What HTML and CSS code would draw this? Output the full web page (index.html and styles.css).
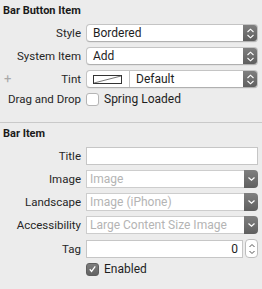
FILE: index.html
```html
<!DOCTYPE html>
<html>
<head>
<meta charset="utf-8">
<link rel="stylesheet" href="styles.css">
</head>
<body>
<div class="panel">
  <section class="group first">
    <div class="heading">Bar Button Item</div>
    <div class="rows">
      <div class="row">
        <span class="label">Style</span>
        <div class="popup"><span class="ptext">Bordered</span><span class="arrows updown"><svg width="9" height="11" viewBox="0 0 9 11"><path d="M1.5 4 L4.5 1.2 L7.5 4 M1.5 7 L4.5 9.8 L7.5 7" fill="none" stroke="#fff" stroke-width="1.1"/></svg></span></div>
      </div>
      <div class="row">
        <span class="label">System Item</span>
        <div class="popup"><span class="ptext">Add</span><span class="arrows updown"><svg width="9" height="11" viewBox="0 0 9 11"><path d="M1.5 4 L4.5 1.2 L7.5 4 M1.5 7 L4.5 9.8 L7.5 7" fill="none" stroke="#fff" stroke-width="1.1"/></svg></span></div>
      </div>
      <div class="row">
        <span class="plus">+</span>
        <span class="label">Tint</span>
        <div class="popup"><span class="swatch"><svg width="29" height="9" viewBox="0 0 29 9"><rect x="0.5" y="0.5" width="28" height="8" fill="#fff" stroke="#333" stroke-width="1"/><path d="M1 8 L28 1" stroke="#555" stroke-width="0.8"/></svg></span><span class="divider"></span><span class="ptext">Default</span><span class="arrows updown"><svg width="9" height="11" viewBox="0 0 9 11"><path d="M1.5 4 L4.5 1.2 L7.5 4 M1.5 7 L4.5 9.8 L7.5 7" fill="none" stroke="#fff" stroke-width="1.1"/></svg></span></div>
      </div>
      <div class="row check-row">
        <span class="label">Drag and Drop</span>
        <label class="check"><span class="box"></span><span>Spring Loaded</span></label>
      </div>
    </div>
  </section>
  <section class="group second">
    <div class="heading">Bar Item</div>
    <div class="rows">
      <div class="row">
        <span class="label">Title</span>
        <div class="field"></div>
      </div>
      <div class="row">
        <span class="label">Image</span>
        <div class="combo"><span class="ctext">Image</span><span class="arrows down"><svg width="9" height="6" viewBox="0 0 9 6"><path d="M1.5 1.5 L4.5 4.3 L7.5 1.5" fill="none" stroke="#fff" stroke-width="1.2"/></svg></span></div>
      </div>
      <div class="row">
        <span class="label">Landscape</span>
        <div class="combo"><span class="ctext">Image (iPhone)</span><span class="arrows down"><svg width="9" height="6" viewBox="0 0 9 6"><path d="M1.5 1.5 L4.5 4.3 L7.5 1.5" fill="none" stroke="#fff" stroke-width="1.2"/></svg></span></div>
      </div>
      <div class="row">
        <span class="label">Accessibility</span>
        <div class="combo"><span class="ctext">Large Content Size Image</span><span class="arrows down"><svg width="9" height="6" viewBox="0 0 9 6"><path d="M1.5 1.5 L4.5 4.3 L7.5 1.5" fill="none" stroke="#fff" stroke-width="1.2"/></svg></span></div>
      </div>
      <div class="row">
        <span class="label">Tag</span>
        <div class="tagwrap"><div class="field num">0</div><span class="stepper"><svg width="8" height="14" viewBox="0 0 8 14"><path d="M1.5 5 L4 2.5 L6.5 5 M1.5 9 L4 11.5 L6.5 9" fill="none" stroke="#555" stroke-width="1"/></svg></span></div>
      </div>
      <div class="row check-row">
        <span class="label"></span>
        <label class="check"><span class="box checked"><svg width="12" height="12" viewBox="0 0 12 12"><path d="M3 6.3 L5 8.6 L9 3.2" fill="none" stroke="#fff" stroke-width="1.4"/></svg></span><span>Enabled</span></label>
      </div>
    </div>
  </section>
</div>
</body>
</html>
```
FILE: styles.css
```css
html, body {
  margin: 0;
  padding: 0;
}
body {
  background: #ececec;
  font-family: "Roboto", "Liberation Sans", sans-serif;
  font-size: 11.5px;
  color: #262626;
  width: 262px;
  height: 289px;
  overflow: hidden;
}
.panel {
  display: flex;
  flex-direction: column;
}
.group {
  padding: 3px 4px 0 0;
}
.first {
  padding-bottom: 15px;
  border-bottom: 1px solid #c9c9c9;
}
.second {
  padding-top: 3px;
}
.heading {
  font-weight: 700;
  font-size: 11px;
  color: #1a1a1a;
  padding-left: 3px;
  height: 15px;
  line-height: 15px;
}
.rows {
  display: flex;
  flex-direction: column;
  gap: 5px;
  margin-top: 6px;
}
.row {
  display: grid;
  grid-template-columns: 81px 172px;
  column-gap: 5px;
  align-items: center;
  height: 18px;
  position: relative;
}
.label {
  text-align: right;
  white-space: nowrap;
}
.plus {
  position: absolute;
  left: 4px;
  top: 1px;
  color: #a8a8a8;
  font-size: 13px;
}
.popup {
  display: flex;
  align-items: center;
  height: 16px;
  background: #fff;
  border: 1px solid #c4c4c4;
  border-bottom-color: #b0b0b0;
  border-radius: 4px;
  overflow: hidden;
  box-shadow: 0 0.5px 0.5px rgba(0,0,0,0.08);
}
.ptext {
  flex: 1;
  padding-left: 6px;
  color: #1e1e1e;
  font-size: 12px;
}
.arrows {
  width: 14px;
  align-self: stretch;
  background: linear-gradient(#7f7f7f, #5f5f5f);
  display: flex;
  align-items: center;
  justify-content: center;
}
.swatch {
  display: flex;
  align-items: center;
  padding-left: 6px;
  width: 36px;
}
.divider {
  width: 1px;
  align-self: stretch;
  background: #c4c4c4;
}
.check-row {
  height: 16px;
  margin-top: -2px;
}
.second .check-row {
  margin-top: -1px;
}
.check {
  display: flex;
  align-items: center;
  gap: 5px;
  font-size: 12px;
  color: #1e1e1e;
}
.box {
  width: 11px;
  height: 11px;
  border: 1px solid #b5b5b5;
  border-radius: 3px;
  background: #fff;
  display: flex;
  align-items: center;
  justify-content: center;
}
.box.checked {
  background: linear-gradient(#7d7d7d, #626262);
  border-color: #5e5e5e;
}
.field {
  height: 16px;
  background: #fff;
  border: 1px solid #c6c6c6;
  box-sizing: content-box;
}
.num {
  flex: 1;
  text-align: right;
  padding-right: 4px;
  line-height: 16px;
  font-size: 12px;
  color: #1e1e1e;
}
.combo {
  display: flex;
  height: 18px;
}
.ctext {
  flex: 1;
  background: #fff;
  border: 1px solid #cdcdcd;
  border-right: none;
  color: #b4b4b4;
  font-size: 12px;
  line-height: 16px;
  padding-left: 3px;
  white-space: nowrap;
  overflow: hidden;
}
.combo .arrows {
  border-radius: 0 4px 4px 0;
}
.tagwrap {
  display: flex;
  align-items: center;
  gap: 2px;
}
.stepper {
  width: 11px;
  height: 17px;
  border: 1px solid #bdbdbd;
  border-radius: 4px;
  background: #fff;
  display: flex;
  align-items: center;
  justify-content: center;
}
```
